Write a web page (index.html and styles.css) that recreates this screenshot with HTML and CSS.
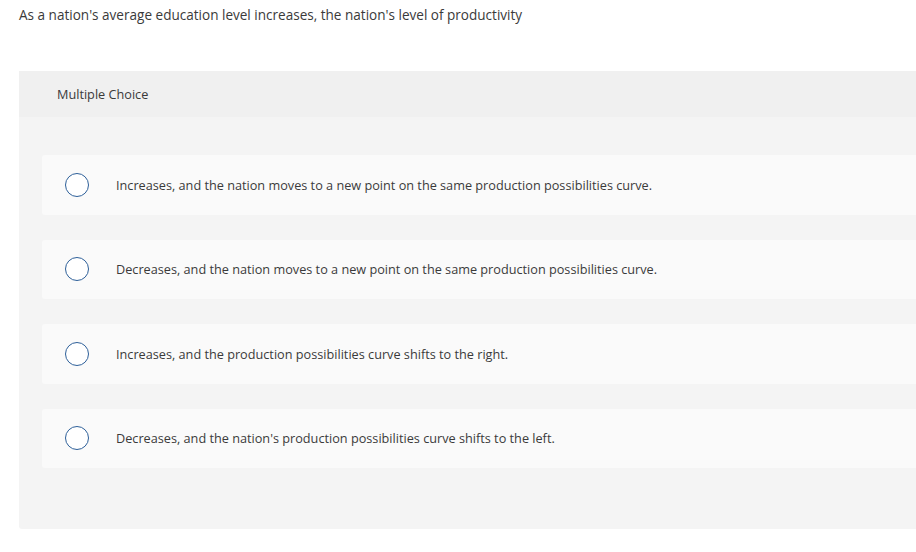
FILE: index.html
```html
<!DOCTYPE html>
<html lang="en">
<head>
<meta charset="utf-8">
<title>Multiple Choice</title>
<link rel="stylesheet" href="styles.css">
</head>
<body>
<div class="page">
  <p class="prompt">As a nation's average education level increases, the nation's level of productivity</p>
  <section class="question">
    <header class="q-header">Multiple Choice</header>
    <div class="q-body">
      <label class="choice">
        <span class="radio"></span>
        <span class="choice-text">Increases, and the nation moves to a new point on the same production possibilities curve.</span>
      </label>
      <label class="choice">
        <span class="radio"></span>
        <span class="choice-text">Decreases, and the nation moves to a new point on the same production possibilities curve.</span>
      </label>
      <label class="choice">
        <span class="radio"></span>
        <span class="choice-text">Increases, and the production possibilities curve shifts to the right.</span>
      </label>
      <label class="choice">
        <span class="radio"></span>
        <span class="choice-text">Decreases, and the nation's production possibilities curve shifts to the left.</span>
      </label>
    </div>
  </section>
</div>
</body>
</html>
```
FILE: styles.css
```css
html, body {
  margin: 0;
  padding: 0;
  background: #ffffff;
  overflow: hidden;
}
body {
  font-family: "Open Sans", "Liberation Sans", Arial, sans-serif;
  color: #333333;
}
.page {
  padding: 0 0 0 19px;
  width: 920px;
}
.prompt {
  margin: 0;
  padding-top: 6px;
  height: 71px;
  box-sizing: border-box;
  font-size: 13.55px;
  line-height: 18px;
  color: #3a3a3a;
}
.question {
  background: #f4f4f4;
  border-radius: 0 0 0 3px;
  height: 458px;
}
.q-header {
  background: #f0f0f0;
  height: 46px;
  display: flex;
  align-items: center;
  padding-left: 38px;
  font-size: 12.7px;
  color: #3a3a3a;
}
.q-body {
  padding: 38px 0 0 23px;
  display: flex;
  flex-direction: column;
  gap: 25px;
}
.choice {
  display: flex;
  align-items: center;
  height: 59.5px;
  background: #fafafa;
  border-radius: 3px 0 0 3px;
  padding-left: 23px;
}
.radio {
  width: 22px;
  height: 22px;
  border: 1.5px solid #2d5f99;
  border-radius: 50%;
  flex: none;
  background: #ffffff;
}
.choice-text {
  margin-left: 27px;
  font-size: 12.7px;
  color: #3a3a3a;
}
```
